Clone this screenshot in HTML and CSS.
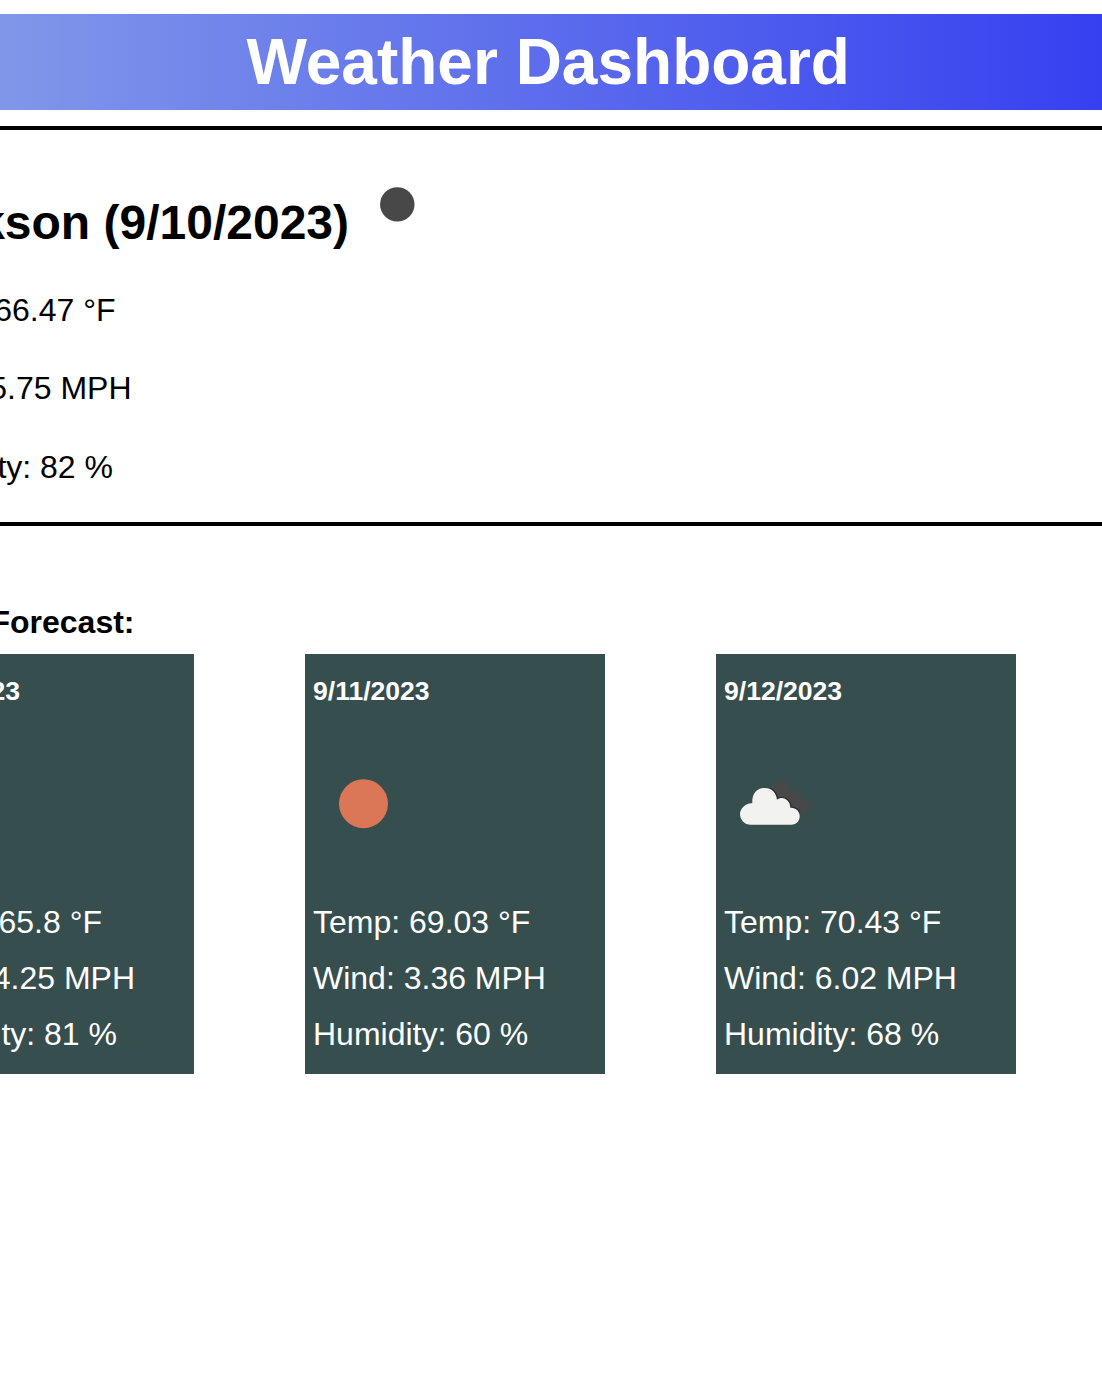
FILE: index.html
```html
<!DOCTYPE html>
<html lang="en">
<head>
<meta charset="utf-8">
<title>Weather Dashboard</title>
<link rel="stylesheet" href="styles.css">
</head>
<body>
<header class="banner"><h1 class="title">Weather Dashboard</h1></header>
<section class="current">
  <div class="current-head">
    <h2 class="city"><span>kson (9/10/2023)</span></h2>
    <svg class="moon" viewBox="0 0 36 36"><circle cx="18.3" cy="18.4" r="17.2" fill="#484849"/></svg>
  </div>
  <p class="reading temp"><span>66.47 °F</span></p>
  <p class="reading wind"><span>5.75 MPH</span></p>
  <p class="reading humidity"><span>ty: 82 %</span></p>
</section>
<section class="forecast">
  <h4 class="forecast-title"><span>Forecast:</span></h4>
  <div class="cards">
    <article class="card card-cut">
      <h5 class="date"><span>23</span></h5>
      <div class="icon"></div>
      <p class="line temp"><span>65.8 °F</span></p>
      <p class="line wind"><span>4.25 MPH</span></p>
      <p class="line humidity"><span>ty: 81 %</span></p>
    </article>
    <article class="card">
      <h5 class="date">9/11/2023</h5>
      <div class="icon"><svg viewBox="0 0 100 100"><circle cx="50.5" cy="49.7" r="24.5" fill="#db7656"/></svg></div>
      <p class="line">Temp: 69.03 °F</p>
      <p class="line">Wind: 3.36 MPH</p>
      <p class="line">Humidity: 60 %</p>
    </article>
    <article class="card">
      <h5 class="date">9/12/2023</h5>
      <div class="icon"><svg viewBox="0 0 300 300">
        <defs>
          <path id="back" d="M118 62C124 44 137 36 151 36C166 36 177 45 182 65C198 61 210 69 213 85C228 86 238 95 238 108C238 121 229 130 208 130L150 118Z"/>
          <path id="front" d="M60 164A31 31 0 0 1 30 132C30 116 48 98 67 100C65 72 80 54 103 54C126 54 139 68 141 89C160 76 181 92 181 113C198 112 209 124 209 138C209 154 199 164 184 164Z"/>
          <clipPath id="back-area"><use href="#back"/></clipPath>
        </defs>
        <g transform="translate(18 48)">
          <use href="#back" fill="#484849"/>
          <use href="#front" fill="none" stroke="#2c2c2e" stroke-width="8" clip-path="url(#back-area)"/>
          <use href="#front" fill="#f2f2f0"/>
        </g>
      </svg></div>
      <p class="line">Temp: 70.43 °F</p>
      <p class="line">Wind: 6.02 MPH</p>
      <p class="line">Humidity: 68 %</p>
    </article>
  </div>
</section>
</body>
</html>
```

FILE: styles.css
```css
* { box-sizing: border-box; margin: 0; padding: 0; }

body {
  font: 32px/36px Helvetica, "Liberation Sans", Arial, sans-serif;
  color: #000;
  background: #fff;
  padding-top: 14px;
  overflow: hidden;
}

.banner {
  height: 96px;
  padding-left: 246.5px;
  background: linear-gradient(to right, #8097e9, #3740f0);
}

.title { font-size: 64px; line-height: 96px; color: #fff; white-space: nowrap; }

.current {
  height: 400px;
  margin-top: 16px;
  border: solid #000;
  border-width: 4px 0;
}

.current-head { display: flex; height: 162px; padding-top: 56px; }

.city {
  display: flex;
  justify-content: flex-end;
  width: 349px;
  padding-top: 10px;
  font-size: 48px;
  line-height: 54px;
  white-space: nowrap;
}

.moon { width: 36px; height: 36px; margin-left: 30px; }

.reading, .card-cut .line, .card-cut .date, .forecast-title {
  display: flex;
  justify-content: flex-end;
  white-space: nowrap;
}

.reading { height: 78px; }
.reading.temp { width: 115.5px; }
.reading.wind { width: 131.5px; height: 79px; }
.reading.humidity { width: 113px; }

.forecast { padding-top: 78px; }
.forecast-title { width: 134.5px; height: 50px; }

.cards {
  display: grid;
  grid-template-columns: 194px 300px 300px;
  column-gap: 111px;
}

.card {
  height: 420px;
  padding: 22px 0 0 8px;
  color: #fff;
  background: #374e4f;
}

.card-cut { padding-left: 0; }
.date { height: 30px; font-size: 26.56px; line-height: 30px; }
.icon { height: 198px; padding-top: 48px; }
.icon svg { display: block; width: 100px; height: 100px; }
.line { height: 56px; }

.card-cut .date { width: 20px; }
.card-cut .temp { width: 102px; }
.card-cut .wind { width: 135px; }
.card-cut .humidity { width: 117px; }
```
